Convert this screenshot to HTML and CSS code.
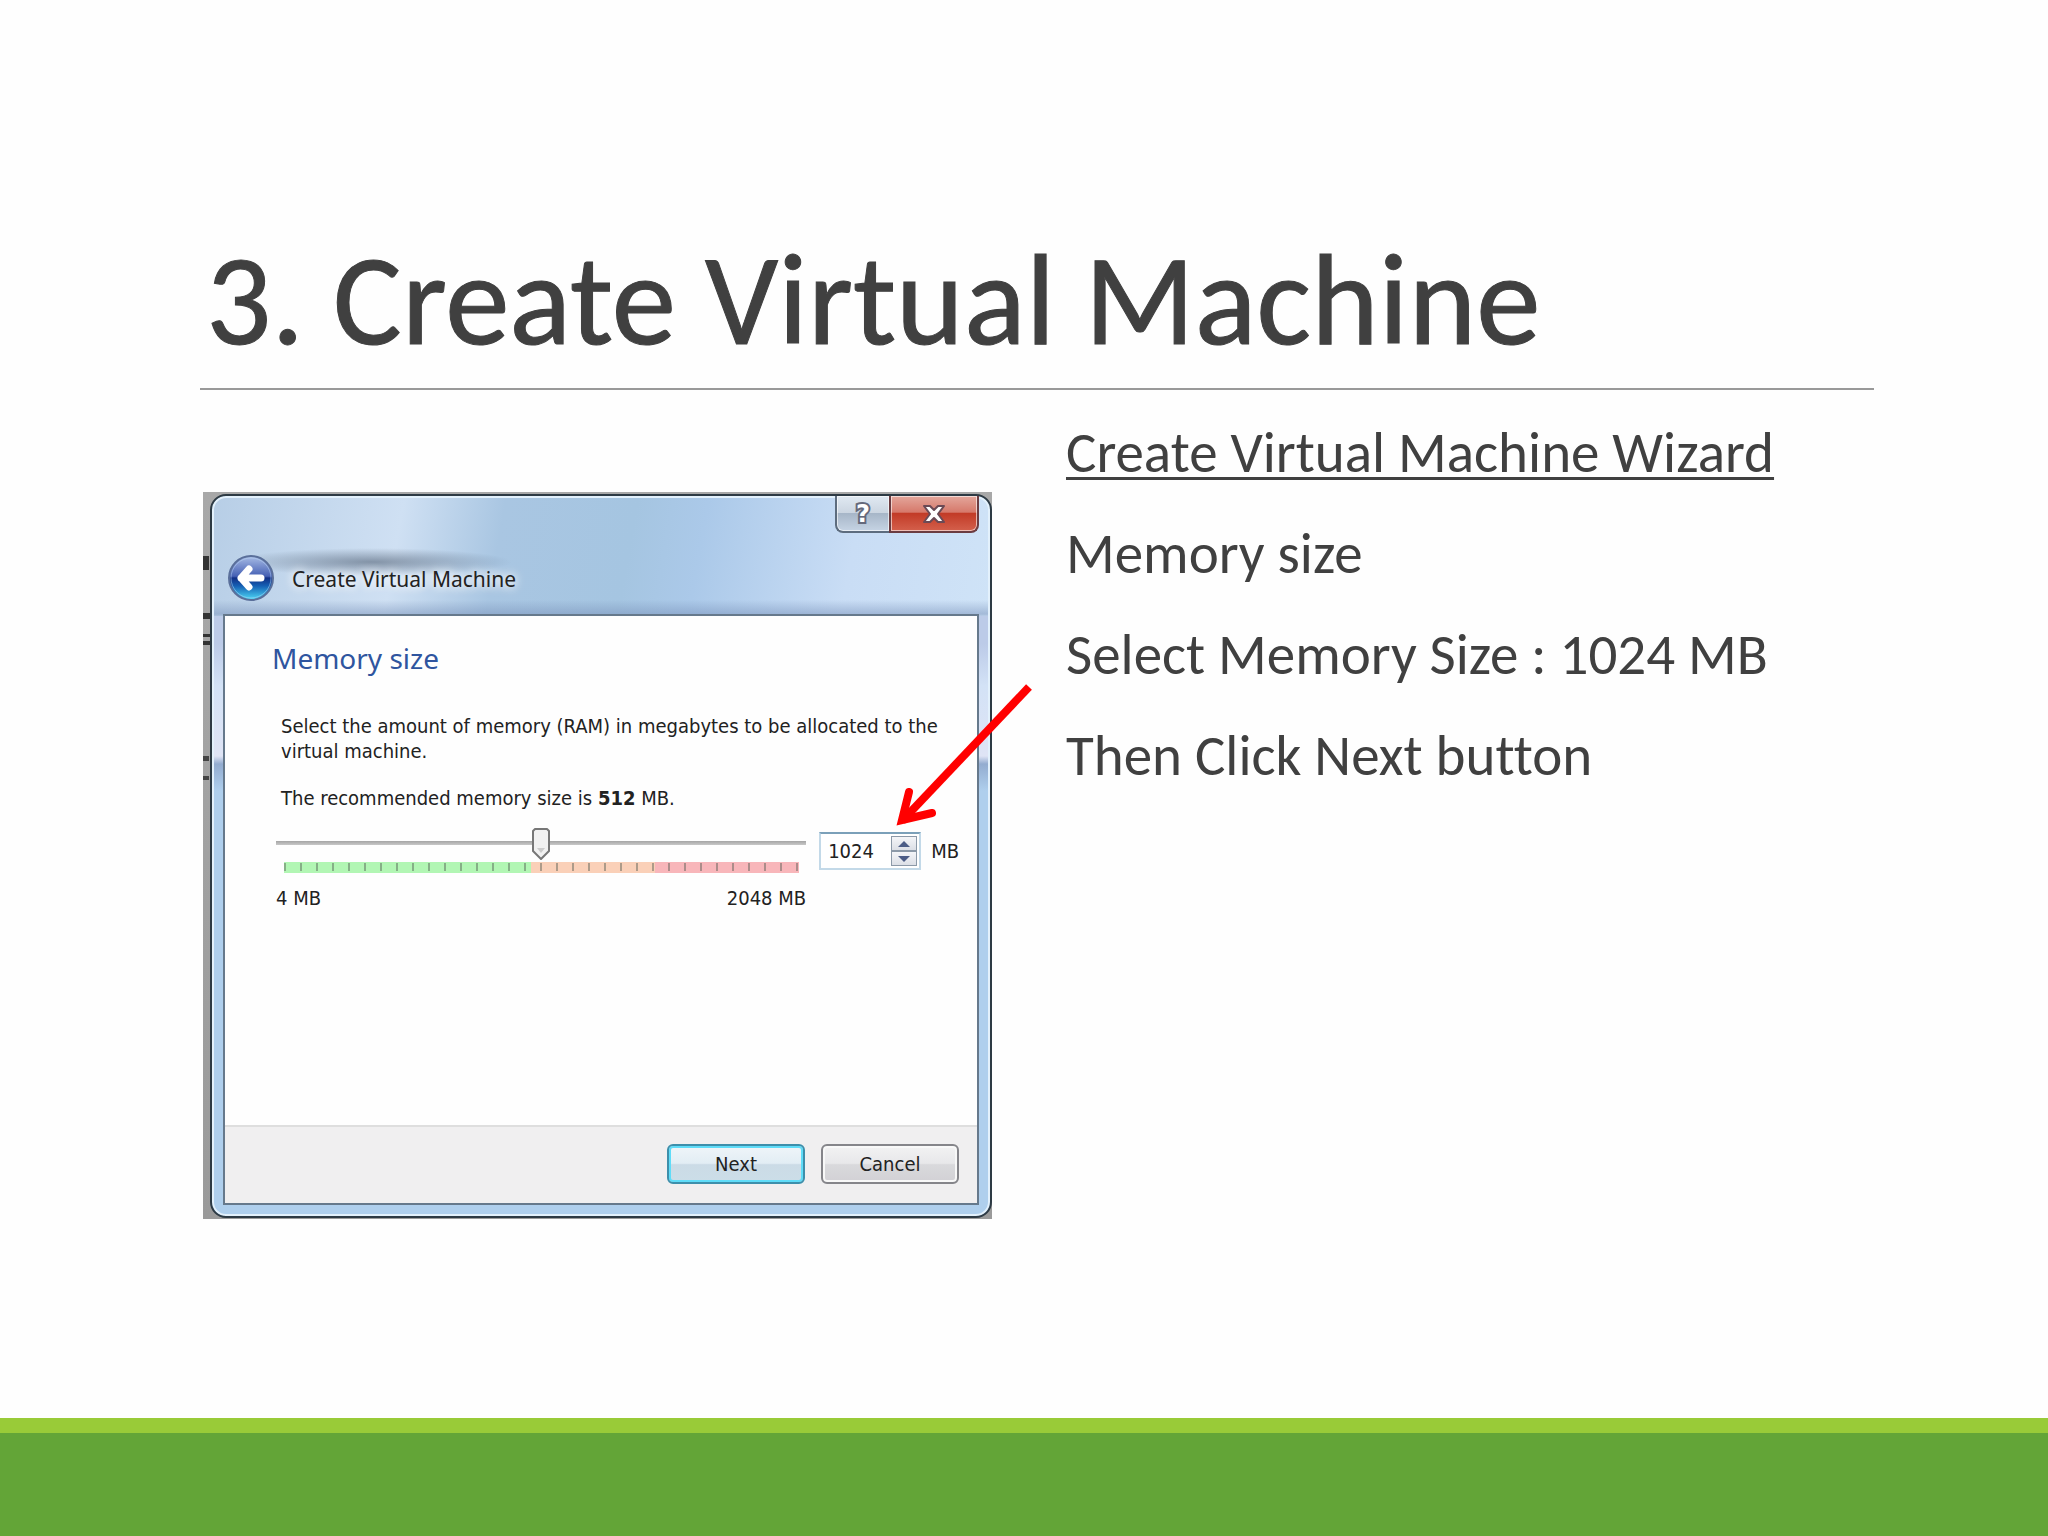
FILE: index.html
```html
<!DOCTYPE html>
<html lang="en">

<head>
    <meta charset="UTF-8">
    <meta name="viewport" content="width=device-width, initial-scale=1.0">
    <title>3. Create Virtual Machine</title>
    <link rel="stylesheet" href="styles.css">
</head>

<body>
    <main class="slide">
        <h1 class="title">3. Create Virtual Machine</h1>

        <div class="content">
            <div class="shot">
                <section class="window" aria-label="Create Virtual Machine">
                    <div class="caption">
                        <button class="cap help" type="button" aria-label="Help">?</button>
                        <button class="cap close" type="button" aria-label="Close">
                            <svg width="24" height="20" viewBox="0 0 24 20">
                                <path d="M2 2h6l4 4 4-4h6l-6 8 6 8h-6l-4-4-4 4H2l6-8z" fill="#fff" stroke="#6b4a55" stroke-width="2" stroke-linejoin="round" />
                            </svg>
                        </button>
                    </div>
                    <div class="heading">
                        <button class="back" type="button" aria-label="Back">
                            <svg width="48" height="48" viewBox="0 0 48 48">
                                <defs>
                                    <linearGradient id="orb" x1="0" y1="0" x2="0" y2="1">
                                        <stop offset="0" stop-color="#a9bde6" />
                                        <stop offset="0.46" stop-color="#4560b4" />
                                        <stop offset="0.5" stop-color="#122f85" />
                                        <stop offset="0.68" stop-color="#1560b4" />
                                        <stop offset="1" stop-color="#4fdcf8" />
                                    </linearGradient>
                                </defs>
                                <circle cx="24" cy="24" r="22" fill="url(#orb)" stroke="#5a6f9a" stroke-width="2" />
                                <circle cx="24" cy="24" r="20" fill="none" stroke="#b8d4f2" stroke-opacity="0.5" />
                                <path d="M22 15L14 24l8 9M14 24h20" fill="none" stroke="#fff" stroke-width="7" stroke-linejoin="round" stroke-linecap="round" />
                            </svg>
                        </button>
                        <span class="window-title">Create Virtual Machine</span>
                    </div>

                    <form class="client">
                        <div class="page">
                            <h2>Memory size</h2>
                            <p>Select the amount of memory (RAM) in megabytes to be allocated to the virtual machine.</p>
                            <p>The recommended memory size is <b>512</b> MB.</p>
                            <div class="memory">
                                <div class="slider">
                                    <input class="range" type="range" min="4" max="2048" value="1024" aria-label="Memory size">
                                    <div class="scale"></div>
                                    <div class="limits"><span>4 MB</span><span>2048 MB</span></div>
                                </div>
                                <div class="spin">
                                    <input id="amount" type="number" value="1024">
                                    <div class="steps">
                                        <button type="button" aria-label="More"><svg width="12" height="6" viewBox="0 0 12 6"><path d="M6 0l6 6H0z" fill="#4c5c86" /></svg></button>
                                        <button type="button" aria-label="Less"><svg width="12" height="6" viewBox="0 0 12 6"><path d="M0 0h12L6 6z" fill="#4c5c86" /></svg></button>
                                    </div>
                                </div>
                                <label class="unit" for="amount">MB</label>
                            </div>
                        </div>
                        <div class="actions">
                            <button class="btn next" type="button">Next</button>
                            <button class="btn" type="button">Cancel</button>
                        </div>
                    </form>
                </section>

                <svg class="arrow" width="160" height="160" viewBox="0 0 160 160">
                    <path d="M149 7L22 141" fill="none" stroke="#f00" stroke-width="8" />
                    <path d="M29 112L22 140L52 133" fill="none" stroke="#f00" stroke-width="8" stroke-linecap="round" stroke-miterlimit="8" />
                </svg>
            </div>

            <div class="notes">
                <p><u>Create Virtual Machine Wizard</u></p>
                <p>Memory size</p>
                <p>Select Memory Size : 1024 MB</p>
                <p>Then Click Next button</p>
            </div>
        </div>
    </main>
    <footer class="band"></footer>
</body>

</html>
```
FILE: styles.css
```css
* {
    box-sizing: border-box;
}

body {
    margin: 0;
    min-height: 100vh;
    display: flex;
    flex-direction: column;
    background-color: #fefefe;
    color: #404040;
    font-family: Carlito, Lato, sans-serif;
    font-variant-ligatures: none;
}

.slide {
    flex: 1;
    padding: 222px 174px 0 200px;
}

.title {
    margin: 0;
    padding: 0 6px 10px;
    border-bottom: 2px solid #999;
    font-size: 129px;
    font-weight: normal;
    line-height: 156px;
    -webkit-text-stroke: 1px #404040;
}

.content {
    display: grid;
    grid-template-columns: minmax(0, 789fr) minmax(0, 808fr);
    column-gap: 74px;
    align-items: start;
    padding-left: 3px;
}

.notes {
    padding-top: 30px;
}

.notes p {
    margin: 0 0 36px;
    font-size: 57px;
    line-height: 65px;
}

.notes u {
    text-decoration-thickness: 3px;
    text-underline-offset: 5px;
    text-decoration-skip-ink: none;
}

/* dialog with a strip of the desktop behind it */
.shot {
    position: relative;
    margin-top: 102px;
    padding: 2px 0 1px 7px;
    background:
        linear-gradient(#333, #333) 0 64px / 6px 14px no-repeat,
        linear-gradient(#333, #333) 0 121px / 7px 6px no-repeat,
        linear-gradient(#333, #333) 0 142px / 7px 3px no-repeat,
        linear-gradient(#333, #333) 0 149px / 7px 4px no-repeat,
        linear-gradient(#444, #444) 0 264px / 6px 5px no-repeat,
        linear-gradient(#444, #444) 0 284px / 6px 4px no-repeat,
        linear-gradient(#a8a8a8, #9a9a9a);
    color: #222;
    font-family: "DejaVu Sans Condensed", "Noto Sans", sans-serif;
    font-size: 20px;
}

.window {
    padding: 0 11px 11px;
    border: 2px solid #2d3a44;
    border-radius: 16px;
    box-shadow: inset 0 0 0 2px #e3f1fc;
    background:
        linear-gradient(#bccbe8 0, #bccbe8 28px, #d3e2f6 70px, #dfe4f5 140px, #93acd0 148px, #afcfed 175px) 0 120px / 100% 175px no-repeat,
        radial-gradient(ellipse 140px 14px at 160px 66px, rgba(70, 85, 105, 0.55), transparent),
        linear-gradient(transparent 104px, rgba(120, 145, 185, 0.5) 118px, transparent 122px),
        linear-gradient(100deg, #b7cee6 0, #cfe0f3 190px, #a9c6e2 290px, #a5c5e1 420px, #abc9e9 490px, #c9ddf5 640px, #cfe3f7 100%) 0 0 / 100% 120px no-repeat,
        #afcfed;
}

button,
input {
    font: inherit;
    color: inherit;
}

.caption {
    display: flex;
    justify-content: flex-end;
}

.cap {
    display: flex;
    align-items: center;
    justify-content: center;
    height: 37px;
    padding: 0;
    border: 2px solid #5d6c7e;
    border-top: 0;
    box-shadow: inset 0 0 0 1px rgba(255, 255, 255, 0.6);
}

.help {
    width: 54px;
    border-right: 0;
    border-radius: 0 0 0 8px;
    background: linear-gradient(#e0e9f2 0, #cbd5e1 48%, #a7b6c8 50%, #c6d4e4 100%);
    color: #fff;
    font-family: "DejaVu Sans", sans-serif;
    font-size: 24px;
    font-weight: bold;
    -webkit-text-stroke: 4px #65697b;
    paint-order: stroke fill;
}

.close {
    width: 90px;
    border-color: #6b3c41;
    border-top: 0;
    border-radius: 0 0 8px 0;
    background: linear-gradient(#e4a79c 0, #d6796b 46%, #c23b27 50%, #d4604c 100%);
}

.heading {
    display: flex;
    align-items: center;
    gap: 17px;
    padding: 21px 4px 12px;
}

.back {
    display: flex;
    padding: 0;
    border: 0;
    border-radius: 50%;
    background: none;
}

.window-title {
    padding-top: 2px;
    font-family: "Noto Sans", sans-serif;
    font-size: 21px;
    line-height: 32px;
    text-shadow: 0 0 8px #fff, 0 0 12px #fff;
}

.client {
    border: 2px solid #66798c;
    background-color: #fefefe;
}

.page {
    min-height: 509px;
    padding: 22px 18px 0 56px;
}

.page h2 {
    margin: 0 0 36px -9px;
    color: #2f559f;
    font-family: "Noto Sans", sans-serif;
    font-size: 28px;
    font-weight: normal;
    line-height: 40px;
}

.page p {
    margin: 0 0 22px;
    line-height: 25px;
}

.page .memory {
    display: flex;
    align-items: flex-start;
    margin: -5px 0 0 -5px;
}

.slider {
    flex: 1;
}

.range {
    display: block;
    width: 100%;
    height: 32px;
    margin: 0 0 2px;
    appearance: none;
    background: linear-gradient(#a5a5a5, #c8c8c8) 0 13px / 100% 4px no-repeat;
}

.range::-webkit-slider-thumb {
    appearance: none;
    width: 18px;
    height: 32px;
    background: url("data:image/svg+xml,%3Csvg xmlns='http://www.w3.org/2000/svg' width='18' height='32'%3E%3Cpath d='M3 1h12l2 2v20l-8 8-8-8V3z' fill='%23f1f1f1' stroke='%23777' stroke-width='2' stroke-linejoin='round'/%3E%3Cpath d='M5 20h8l-4 5z' fill='%23ccc'/%3E%3C/svg%3E");
}

.scale {
    height: 11px;
    margin: 0 7px 0 8px;
    background:
        repeating-linear-gradient(90deg, rgba(80, 90, 80, 0.45) 0 2px, transparent 2px 16px) 0 1px / 100% 8px no-repeat,
        linear-gradient(90deg, #b2f6b4 48%, #fad0b8 48% 72%, #f8b6ba 72%);
}

.limits {
    display: flex;
    justify-content: space-between;
    padding-top: 13px;
    line-height: 25px;
}

.spin {
    display: flex;
    width: 102px;
    height: 38px;
    margin: 4px 10px 0 13px;
    padding: 2px;
    border: 2px solid #c3d9e8;
    border-top-color: #7ba0b9;
    background-color: #fff;
}

.spin input {
    flex: 1;
    min-width: 0;
    padding: 0 0 0 5px;
    border: 0;
    background: none;
    appearance: textfield;
}

.spin input::-webkit-inner-spin-button {
    display: none;
}

.steps {
    display: flex;
    flex-direction: column;
    width: 26px;
}

.steps button {
    flex: 1;
    display: flex;
    align-items: center;
    justify-content: center;
    padding: 0;
    border: 1px solid #8c99a8;
    background: linear-gradient(#f4f5f8, #dcdfe6);
}

.unit {
    margin-top: 11px;
    line-height: 25px;
}

.actions {
    display: flex;
    justify-content: flex-end;
    gap: 16px;
    padding: 17px 18px 19px;
    border-top: 2px solid #dedede;
    background-color: #f0eff0;
}

.btn {
    width: 138px;
    height: 40px;
    padding: 0;
    border: 2px solid #85858a;
    border-radius: 6px;
    box-shadow: inset 0 0 0 2px #f8f8f8;
    background: linear-gradient(#f2f2f3 0, #e8e8ea 48%, #d9d9dc 52%, #d2d1d5 100%);
}

.next {
    border-color: #3d8fab;
    box-shadow: inset 0 0 0 2px #5fdcf8;
    background: linear-gradient(#eff5f9 0, #e2edf4 48%, #cbdbe6 52%, #ccdee8 100%);
}

/* red pointer lies over the memory box and runs past the dialog */
.arrow {
    position: absolute;
    top: 188px;
    right: -48px;
}

.band {
    height: 118px;
    border-top: 15px solid #99cb38;
    background-color: #63a537;
}
```
